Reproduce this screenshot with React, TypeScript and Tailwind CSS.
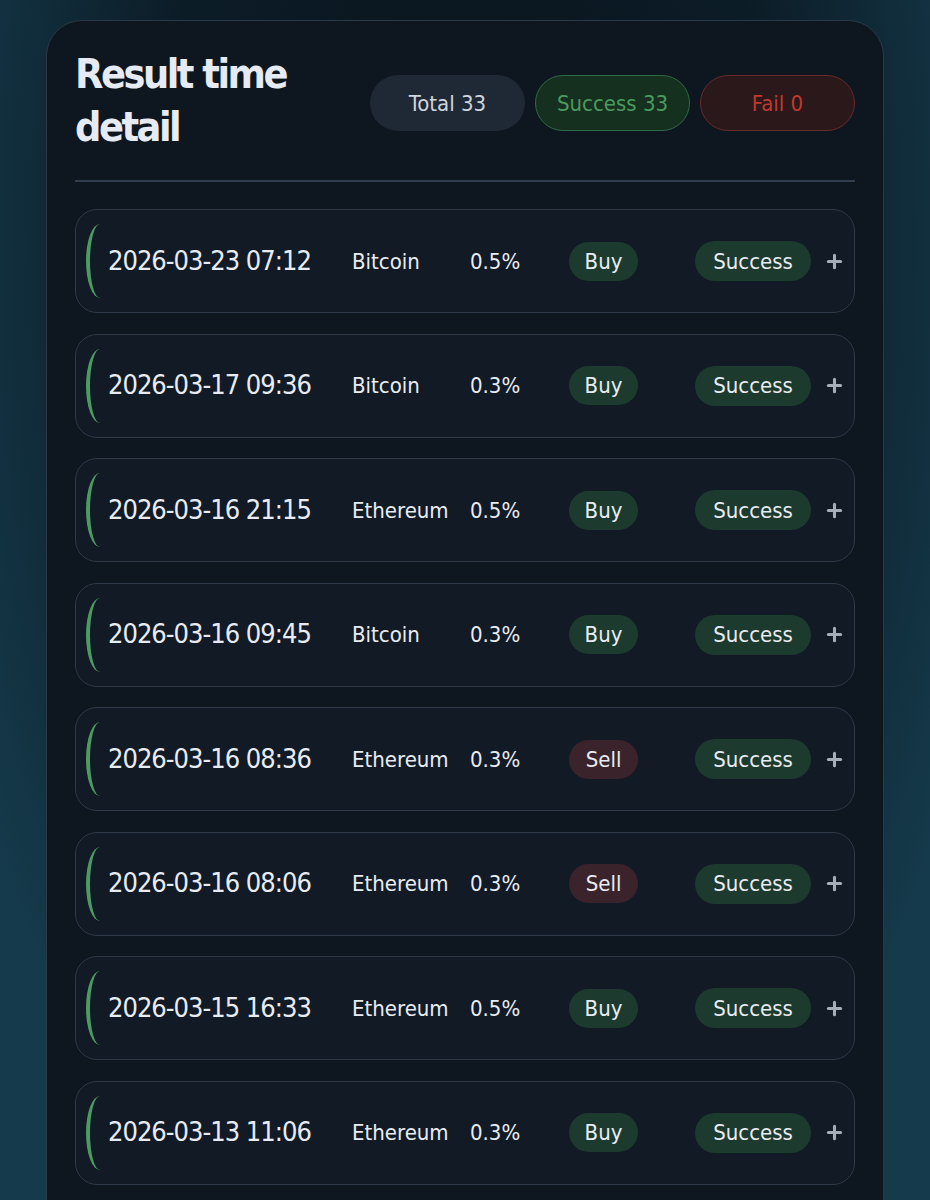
import { Plus } from "lucide-react";

type Trade = {
  time: string;
  asset: string;
  pct: string;
  side: "Buy" | "Sell";
  status: string;
};

const trades: Trade[] = [
  { time: "2026-03-23 07:12", asset: "Bitcoin", pct: "0.5%", side: "Buy", status: "Success" },
  { time: "2026-03-17 09:36", asset: "Bitcoin", pct: "0.3%", side: "Buy", status: "Success" },
  { time: "2026-03-16 21:15", asset: "Ethereum", pct: "0.5%", side: "Buy", status: "Success" },
  { time: "2026-03-16 09:45", asset: "Bitcoin", pct: "0.3%", side: "Buy", status: "Success" },
  { time: "2026-03-16 08:36", asset: "Ethereum", pct: "0.3%", side: "Sell", status: "Success" },
  { time: "2026-03-16 08:06", asset: "Ethereum", pct: "0.3%", side: "Sell", status: "Success" },
  { time: "2026-03-15 16:33", asset: "Ethereum", pct: "0.5%", side: "Buy", status: "Success" },
  { time: "2026-03-13 11:06", asset: "Ethereum", pct: "0.3%", side: "Buy", status: "Success" },
];

function TradeRow({ trade }: { trade: Trade }) {
  return (
    <div className="flex h-[104px] items-center rounded-[22px] border border-[#2e3a48] bg-[#111a25] pl-[10px]">
      <div className="flex h-[74px] items-center rounded-tl-[14px_37px] rounded-bl-[14px_37px] border-l-[4px] border-[#4e9b62] pl-[18px]">
        <div className="w-[244px] text-[27px] tracking-[-1px] text-[#e8ecf2]">{trade.time}</div>
        <div className="w-[118px] text-[22px] text-[#e8ecf2]">{trade.asset}</div>
        <div className="w-[99px] text-[22px] text-[#e8ecf2]">{trade.pct}</div>
        <div className="w-[126px]">
          <span
            className={
              trade.side === "Buy"
                ? "inline-flex h-[39px] w-[69px] items-center justify-center rounded-full bg-[#1d3a2f] text-[22px] text-[#e8ecf2]"
                : "inline-flex h-[39px] w-[69px] items-center justify-center rounded-full bg-[#3a232a] text-[22px] text-[#e8ecf2]"
            }
          >
            {trade.side}
          </span>
        </div>
        <span className="inline-flex h-[40px] w-[116px] items-center justify-center rounded-full bg-[#1d3a2f] text-[22px] text-[#e8ecf2]">
          {trade.status}
        </span>
        <Plus className="ml-[13px] h-[21px] w-[21px] text-[#a6aeb9]" strokeWidth={3.5} />
      </div>
    </div>
  );
}

export default function App() {
  return (
    <div
      className="min-h-screen bg-[radial-gradient(ellipse_60%_90%_at_50%_20%,#0a141d_0%,#0c1c27_55%,#153a4b_100%)] px-[46px] pt-[20px]"
      style={{ fontFamily: '"DejaVu Sans Condensed", "Roboto Condensed", Roboto, sans-serif' }}
    >
      <div className="rounded-t-[36px] border border-[#2a3949] bg-[#0e1620] px-[28px] pt-[27px] pb-[40px]">
        {/* Header */}
        <div className="flex items-center justify-between">
          <h1 className="w-[260px] text-[41px] leading-[53px] font-bold tracking-[-2.5px] text-[#e6eaf2]">
            Result time detail
          </h1>
          <div className="mt-[4px] flex gap-[10px]">
            <span className="inline-flex h-[56px] w-[155px] items-center justify-center rounded-full bg-[#1f2835] text-[22px] text-[#cfd5dd]">
              Total 33
            </span>
            <span className="inline-flex h-[56px] w-[155px] items-center justify-center rounded-full border border-[#2e6a44] bg-[#16301f] text-[22px] text-[#4c9a5e]">
              Success 33
            </span>
            <span className="inline-flex h-[56px] w-[155px] items-center justify-center rounded-full border border-[#6a2a2a] bg-[#2a181b] text-[22px] text-[#c0392e]">
              Fail 0
            </span>
          </div>
        </div>

        <div className="mt-[26px] border-t-2 border-[#303e4d]" />

        {/* Rows */}
        <div className="mt-[27px] flex flex-col gap-[20.5px]">
          {trades.map((t) => (
            <TradeRow key={t.time} trade={t} />
          ))}
        </div>
      </div>
    </div>
  );
}
